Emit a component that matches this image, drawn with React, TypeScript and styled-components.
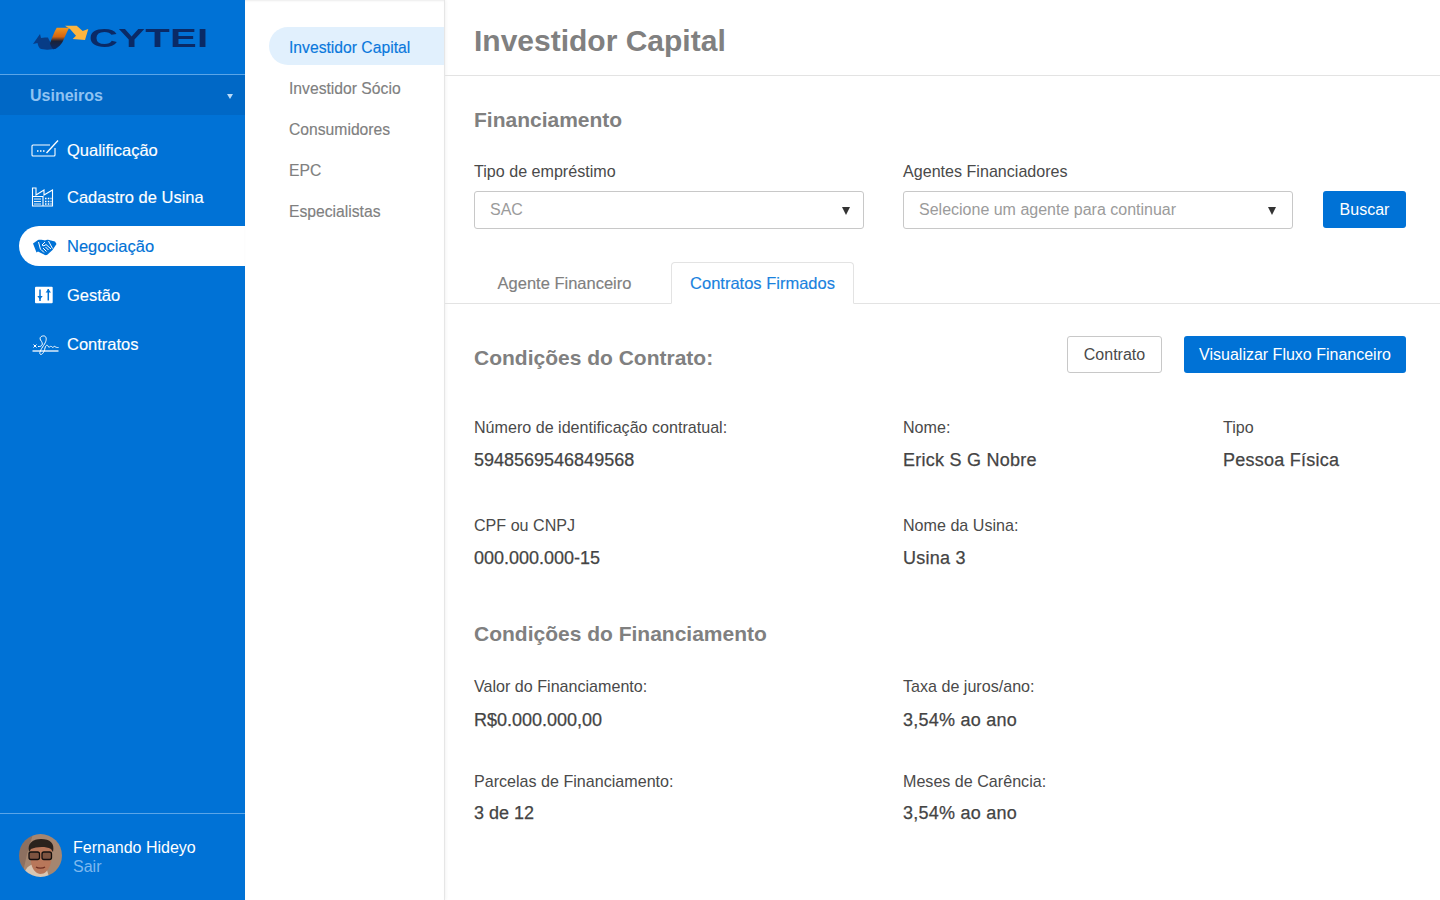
import styled, { createGlobalStyle } from "styled-components";

const GlobalStyle = createGlobalStyle`
  * { box-sizing: border-box; }
  html, body { margin: 0; height: 100%; }
  body {
    font-family: "Liberation Sans", Arial, sans-serif;
    background: #fff;
    color: #444;
    overflow: hidden;
  }
`;

const Layout = styled.div`
  display: grid;
  grid-template-columns: 245px 200px 1fr;
  height: 900px;
`;

const Sidebar = styled.aside`
  display: flex;
  flex-direction: column;
  background: #0072d6;
  color: #fff;
`;
const LogoBar = styled.div`
  display: flex;
  align-items: center;
  height: 75px;
  padding: 2px 0 0 33px;
  border-bottom: 1px solid #5aa5e8;
`;
const LogoText = styled.span`
  display: inline-block;
  font-size: 26px;
  line-height: 26px;
  font-weight: 700;
  color: #0a2a66;
  margin-left: 0;
  transform: scaleX(1.54);
  transform-origin: left center;
  letter-spacing: 0.2px;
`;
const GroupRow = styled.div`
  display: flex;
  align-items: center;
  justify-content: space-between;
  height: 40px;
  padding: 2px 12px 0 30px;
  background: #0068c6;
  color: #8fc3f2;
  font-size: 16px;
  font-weight: 700;
`;
const Caret = styled.span`
  width: 0;
  height: 0;
  border-left: 3px solid transparent;
  border-right: 3px solid transparent;
  border-top: 5px solid #b9daf7;
`;
const Menu = styled.nav`
  display: flex;
  flex-direction: column;
  flex: 1;
  padding: 15px 0 0 19px;
  gap: 9px;
`;
const MenuItem = styled.div<{ $active?: boolean }>`
  display: flex;
  align-items: center;
  height: 40px;
  padding-left: 12px;
  gap: 8px;
  font-size: 16.5px;
  -webkit-text-stroke: 0.15px currentColor;
  border-radius: 20px 0 0 20px;
  background: ${(p) => (p.$active ? "#fff" : "transparent")};
  color: ${(p) => (p.$active ? "#0072d6" : "#fff")};
  &:first-child { margin-bottom: -2px; }
  svg { width: 28px; height: 24px; flex: none; }
`;
const UserBar = styled.div`
  display: flex;
  align-items: center;
  height: 87px;
  gap: 11px;
  padding: 0 0 0 19px;
  border-top: 1px solid #5aa5e8;
  svg { width: 43px; height: 43px; flex: none; margin-top: -4px; }
`;
const UserName = styled.div`
  font-size: 16px;
  line-height: 19px;
`;
const Logout = styled.div`
  font-size: 16px;
  line-height: 19px;
  color: #7db8ee;
`;

const SubNav = styled.nav`
  display: flex;
  flex-direction: column;
  gap: 3px;
  padding: 27px 0 0 24px;
  border-right: 1px solid #e6e6e6;
  box-shadow: inset 0 2px 2px -1px rgba(0, 0, 0, 0.08), 1px 0 3px rgba(0, 0, 0, 0.05);
`;
const SubItem = styled.div<{ $active?: boolean }>`
  display: flex;
  align-items: center;
  height: 38px;
  padding: 4px 0 0 20px;
  font-size: 15.7px;
  -webkit-text-stroke: 0.15px currentColor;
  border-radius: 19px 0 0 19px;
  background: ${(p) => (p.$active ? "#e1f0fd" : "transparent")};
  color: ${(p) => (p.$active ? "#0a78dc" : "#808080")};
`;

const Main = styled.main`
  display: flex;
  flex-direction: column;
  min-width: 0;
`;
const PageHeader = styled.header`
  height: 76px;
  padding: 21px 29px 0;
  border-bottom: 1px solid #e3e3e3;
`;
const PageTitle = styled.h1`
  margin: 0;
  font-size: 30px;
  line-height: 40px;
  font-weight: 700;
  color: #808080;
`;
const Filters = styled.section`
  padding: 29px 34px 0 29px;
`;
const SectionTitle = styled.h2`
  margin: 0;
  font-size: 21px;
  line-height: 30px;
  font-weight: 700;
  color: #808080;
`;
const FilterRow = styled.div`
  display: flex;
  align-items: flex-start;
  margin-top: 26px;
`;
const FilterField = styled.div`
  width: 390px;
  margin-right: 39px;
  &:nth-child(2) { margin-right: 30px; }
`;
const FieldLabel = styled.div`
  font-size: 16.1px;
  line-height: 20px;
  color: #4a4a4a;
`;
const SelectBox = styled.div<{ $caretInset: number }>`
  display: flex;
  align-items: center;
  justify-content: space-between;
  height: 38px;
  margin-top: 10px;
  padding: 0 ${(p) => p.$caretInset}px 0 15px;
  border: 1px solid #c8c8c8;
  border-radius: 3px;
  font-size: 16px;
  color: #9b9b9b;
`;
const SelectCaret = styled.span`
  width: 0;
  height: 0;
  border-left: 4px solid transparent;
  border-right: 4px solid transparent;
  border-top: 8px solid #333;
  margin-top: 2px;
`;
const PrimaryButton = styled.button`
  height: 37px;
  padding: 0;
  border: 0;
  border-radius: 3px;
  background: #0072d6;
  color: #fff;
  white-space: nowrap;
  font: 16px "Liberation Sans", Arial, sans-serif;
`;
const SearchButton = styled(PrimaryButton)`
  margin-top: 30px;
  width: 83px;
`;
const Tabs = styled.div`
  display: flex;
  align-items: flex-end;
  height: 42px;
  margin-top: 33px;
  padding-left: 29px;
  border-bottom: 1px solid #e3e3e3;
`;
const Tab = styled.div<{ $active?: boolean }>`
  display: flex;
  align-items: center;
  justify-content: center;
  height: ${(p) => (p.$active ? "42px" : "41px")};
  width: ${(p) => (p.$active ? "183px" : "197px")};
  margin-bottom: -1px;
  padding-right: ${(p) => (p.$active ? "0" : "16px")};
  font-size: 16.5px;
  -webkit-text-stroke: 0.15px currentColor;
  color: ${(p) => (p.$active ? "#1a82de" : "#808080")};
  background: ${(p) => (p.$active ? "#fff" : "transparent")};
  border: 1px solid ${(p) => (p.$active ? "#e3e3e3" : "transparent")};
  border-bottom-color: ${(p) => (p.$active ? "#fff" : "transparent")};
  border-radius: 4px 4px 0 0;
`;
const Content = styled.section`
  padding: 32px 34px 0 29px;
`;
const ContractHeader = styled.div`
  display: flex;
  align-items: flex-start;
  gap: 22px;
`;
const ContractTitle = styled(SectionTitle)`
  flex: 1;
  margin-top: 7px;
`;
const OutlineButton = styled.button`
  height: 37px;
  width: 95px;
  border: 1px solid #c8c8c8;
  border-radius: 3px;
  background: #fff;
  color: #4a4a4a;
  font: 16px "Liberation Sans", Arial, sans-serif;
`;
const FlowButton = styled(PrimaryButton)`
  width: 222px;
`;
const InfoGrid = styled.div<{ $rowGap: number; $top: number }>`
  display: grid;
  grid-template-columns: 429px 320px 1fr;
  row-gap: ${(p) => p.$rowGap}px;
  margin-top: ${(p) => p.$top}px;
`;
const InfoLabel = styled.div`
  font-size: 16.1px;
  line-height: 20px;
  color: #4a4a4a;
`;
const InfoValue = styled.div<{ $text?: boolean; $gap?: number }>`
  margin-top: ${(p) => p.$gap ?? 12}px;
  font-size: 18px;
  line-height: 22px;
  color: #444;
  -webkit-text-stroke: 0.25px currentColor;
  letter-spacing: ${(p) => (p.$text ? "0.25px" : "0")};
`;
const SecondTitle = styled(SectionTitle)`
  margin-top: 50px;
`;

const Mark = () => (
  <svg width="56" height="26" viewBox="0 0 56 26" style={{ flex: "none" }}>
    <defs>
      <linearGradient id="band" x1="0" y1="0" x2="0" y2="1">
        <stop offset="0" stopColor="#f2971f" />
        <stop offset="0.42" stopColor="#d4640f" />
        <stop offset="0.62" stopColor="#1b2238" />
        <stop offset="1" stopColor="#0a2a66" />
      </linearGradient>
    </defs>
    <path d="M0 19 L7 9 L8 13 C11 12.500 13 12.500 15 12.500 C17 17 19 21 23.700 23.500 C18 25 10 25 7 23.500 C5.500 22 5 20 4.500 18 Z" fill="#073c86" />
    <path d="M32 .7 L43.700 .7 L49.700 6 L55.300 4 L52 15 L39.700 14 L43 10.700 L37 4 Z" fill="#fbb53f" />
    <path d="M23.700 2.700 L36.300 2.700 C33 8 31 15 28.700 18.300 C26 22 23 24 20.300 24.300 C18.500 23 17.500 20.500 17 18.300 C19 13 21 7 23.700 2.700 Z" fill="url(#band)" />
  </svg>
);

const QualIcon = () => (
  <svg viewBox="0 0 28 24" fill="none" stroke="currentColor" strokeWidth="1.100">
    <path d="M19 7H2a1 1 0 0 0-1 1v9a1 1 0 0 0 1 1h21a1 1 0 0 0 1-1v-7" />
    <path d="M15.500 15 L27 2.500" strokeWidth="1.300" />
    <path d="M6 13h1.500M9 13h1.500M12 13h1.500" strokeWidth="1.500" />
  </svg>
);
const FactoryIcon = () => (
  <svg viewBox="0 0 28 24" fill="none" stroke="currentColor" strokeWidth="1.100">
    <path d="M1.500 21V3H5V10L13 5V10L21.500 5V21Z" />
    <path d="M1.500 11.500H12V21" />
    <path d="M3 14h7M3 16.500h7M3 19h7" strokeWidth="0.900" />
    <path d="M14 13.500h1.500M16.800 13.500h1.500M19.500 13.500h1M14 16.500h1.500M16.800 16.500h1.500M19.500 16.500h1M14 19h1.500M16.800 19h1.500M19.500 19h1" strokeWidth="1.400" />
  </svg>
);
const HandshakeIcon = () => (
  <svg viewBox="0 0 28 24">
    <path
      d="M2 9.500 L7 6 C10 5.500 13 6.500 14 6.500 C15 6 16 5.500 18 6 L24 7.500 L25.500 10 L21.500 16 L16 21 C14 21.500 13 20.500 12 20 L7 17.500 L5.500 18.500 Z"
      fill="currentColor"
    />
    <path
      d="M7.500 8 L9.500 15.500 M17.500 7 L21.500 14.500 M14 8 L11 11 C12 12.500 14 11.500 15 10.500 L20 15 M10 15.500 L13 18.500 M12 14 L15.500 17.500 M14.500 13 L17.500 16"
      fill="none"
      stroke="#fff"
      strokeWidth="1"
    />
  </svg>
);
const SlidersIcon = () => (
  <svg viewBox="0 0 28 24">
    <rect x="4" y="3.700" width="17.700" height="16.600" rx="1" fill="currentColor" />
    <path d="M9 6.500v11.500M17.300 6v11.500" stroke="#0072d6" strokeWidth="1.500" />
    <path d="M6.300 13h5.400L9 16.500ZM14.600 9.500h5.400L17.300 6Z" fill="#0072d6" />
  </svg>
);
const SignIcon = () => (
  <svg viewBox="0 0 28 24" fill="none" stroke="currentColor" strokeWidth="1">
    <path d="M1.500 19h26" strokeWidth="1.300" />
    <path d="M2.500 12.500l3 3M5.500 12.500l-3 3" />
    <path d="M7 14.500 C11 15 13 12 9.500 8 C8 5 11 3.500 13.500 4 C16 5 15.500 9 13.500 12 C11 16 8 20 9 22 C10 23.500 13 21.500 14 16 C15 12 17 13 17.500 15 C18.500 16 19.500 13 21 15 C22 16.500 23 13.500 24 14.500 C25 15.500 26 15.500 27.500 15.500" />
  </svg>
);
const Avatar = () => (
  <svg viewBox="0 0 43 43">
    <defs>
      <clipPath id="face"><circle cx="21.500" cy="21.500" r="21.500" /></clipPath>
      <filter id="soft"><feGaussianBlur stdDeviation="0.7" /></filter>
    </defs>
    <g clipPath="url(#face)">
      <g filter="url(#soft)">
        <rect width="43" height="43" fill="#a5866f" />
        <path d="M0 0h14L8 20 3 43H0Z" fill="#8d7060" />
        <path d="M4 43 C6 34 10 31 15 30 L28 36 L30 43Z" fill="#d8c6b3" />
        <path d="M11 15 C11 9 32 9 33 15 L32 29 C29 37 26 40 21 40 C16 39 13 35 12 28 Z" fill="#b8775a" />
        <path d="M10 18 C8 9 14 5 22 5 C31 5 36 9 34 18 L32 15 C26 12 17 13 12 15 Z" fill="#2b211d" />
        <rect x="10" y="18" width="10.500" height="7.500" rx="2" fill="#7d5240" stroke="#141110" strokeWidth="1.300" />
        <rect x="23" y="18" width="9.500" height="7.500" rx="2" fill="#7d5240" stroke="#141110" strokeWidth="1.300" />
        <path d="M17 33 C19 34.500 24 34.500 26 33" stroke="#6e2f22" strokeWidth="1.400" fill="none" />
      </g>
    </g>
  </svg>
);

export default function App() {
  return (
    <Layout>
      <GlobalStyle />
      <Sidebar>
        <LogoBar>
          <Mark />
          <LogoText>CYTEI</LogoText>
        </LogoBar>
        <GroupRow>
          Usineiros
          <Caret />
        </GroupRow>
        <Menu>
          <MenuItem><QualIcon />Qualificação</MenuItem>
          <MenuItem><FactoryIcon />Cadastro de Usina</MenuItem>
          <MenuItem $active><HandshakeIcon />Negociação</MenuItem>
          <MenuItem><SlidersIcon />Gestão</MenuItem>
          <MenuItem><SignIcon />Contratos</MenuItem>
        </Menu>
        <UserBar>
          <Avatar />
          <div>
            <UserName>Fernando Hideyo</UserName>
            <Logout>Sair</Logout>
          </div>
        </UserBar>
      </Sidebar>
      <SubNav>
        <SubItem $active>Investidor Capital</SubItem>
        <SubItem>Investidor Sócio</SubItem>
        <SubItem>Consumidores</SubItem>
        <SubItem>EPC</SubItem>
        <SubItem>Especialistas</SubItem>
      </SubNav>
      <Main>
        <PageHeader>
          <PageTitle>Investidor Capital</PageTitle>
        </PageHeader>
        <Filters>
          <SectionTitle>Financiamento</SectionTitle>
          <FilterRow>
            <FilterField>
              <FieldLabel>Tipo de empréstimo</FieldLabel>
              <SelectBox $caretInset={13}>SAC<SelectCaret /></SelectBox>
            </FilterField>
            <FilterField>
              <FieldLabel>Agentes Financiadores</FieldLabel>
              <SelectBox $caretInset={16}>Selecione um agente para continuar<SelectCaret /></SelectBox>
            </FilterField>
            <SearchButton>Buscar</SearchButton>
          </FilterRow>
        </Filters>
        <Tabs>
          <Tab>Agente Financeiro</Tab>
          <Tab $active>Contratos Firmados</Tab>
        </Tabs>
        <Content>
          <ContractHeader>
            <ContractTitle>Condições do Contrato:</ContractTitle>
            <OutlineButton>Contrato</OutlineButton>
            <FlowButton>Visualizar Fluxo Financeiro</FlowButton>
          </ContractHeader>
          <InfoGrid $rowGap={44} $top={44}>
            <div><InfoLabel>Número de identificação contratual:</InfoLabel><InfoValue>5948569546849568</InfoValue></div>
            <div><InfoLabel>Nome:</InfoLabel><InfoValue $text>Erick S G Nobre</InfoValue></div>
            <div><InfoLabel>Tipo</InfoLabel><InfoValue $text>Pessoa Física</InfoValue></div>
            <div><InfoLabel>CPF ou CNPJ</InfoLabel><InfoValue>000.000.000-15</InfoValue></div>
            <div><InfoLabel>Nome da Usina:</InfoLabel><InfoValue $text>Usina 3</InfoValue></div>
          </InfoGrid>
          <SecondTitle>Condições do Financiamento</SecondTitle>
          <InfoGrid $rowGap={40} $top={27}>
            <div><InfoLabel>Valor do Financiamento:</InfoLabel><InfoValue $gap={13}>R$0.000.000,00</InfoValue></div>
            <div><InfoLabel>Taxa de juros/ano:</InfoLabel><InfoValue $gap={13} $text>3,54% ao ano</InfoValue></div>
            <div />
            <div><InfoLabel>Parcelas de Financiamento:</InfoLabel><InfoValue $gap={11}>3 de 12</InfoValue></div>
            <div><InfoLabel>Meses de Carência:</InfoLabel><InfoValue $gap={11} $text>3,54% ao ano</InfoValue></div>
          </InfoGrid>
        </Content>
      </Main>
    </Layout>
  );
}
